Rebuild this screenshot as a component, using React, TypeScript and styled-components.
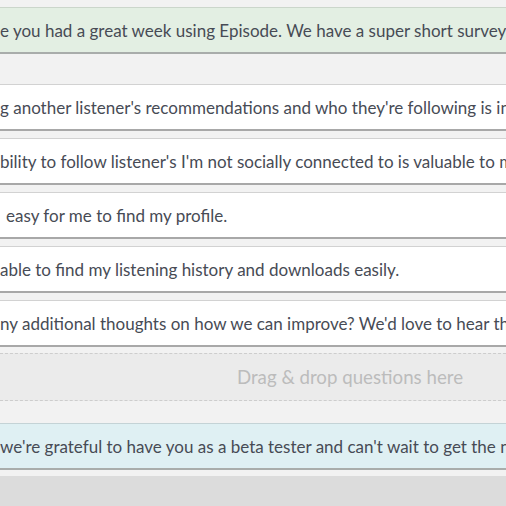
import React from "react";
import styled, { createGlobalStyle } from "styled-components";

const Global = createGlobalStyle`
  html, body { margin: 0; padding: 0; }
  body {
    width: 506px;
    height: 506px;
    overflow: hidden;
    background: #dcdcdc;
    font-family: Lato, "Open Sans", sans-serif;
  }
`;

const Page = styled.div`
  display: flex;
  flex-direction: column;
`;

const Canvas = styled.div`
  background: #f2f2f2;
  padding: 7px 0 6px;
  display: flex;
  flex-direction: column;
`;

const Banner = styled.div<{ $tone: "green" | "blue" }>`
  height: 44px;
  display: flex;
  align-items: center;
  white-space: nowrap;
  overflow: hidden;
  font-size: 17px;
  color: #474b55;
  background: ${(p) => (p.$tone === "green" ? "#e3efe3" : "#dff0f3")};
  border-top: 1px solid ${(p) => (p.$tone === "green" ? "#cbd6cb" : "#c4d3d6")};
  border-bottom: 2px solid #a9adab;
`;

const Text = styled.span<{ $indent: number }>`
  display: block;
  margin-left: ${(p) => p.$indent}px;
`;

const Spacer = styled.div<{ $h: number }>`
  height: ${(p) => p.$h}px;
`;

const List = styled.div`
  display: flex;
  flex-direction: column;
  gap: 7px;
`;

const Card = styled.div`
  height: 44px;
  display: flex;
  align-items: center;
  white-space: nowrap;
  overflow: hidden;
  font-size: 17px;
  color: #474b55;
  background: #ffffff;
  border-top: 1px solid #d2d2d2;
  border-bottom: 2px solid #a8a8a8;
`;

const DropZone = styled.div`
  margin-top: 6px;
  height: 46px;
  display: flex;
  align-items: center;
  justify-content: center;
  padding-left: 194px;
  background: #ebebeb;
  border-top: 1px dashed #cdcdcd;
  border-bottom: 1px dashed #cdcdcd;
  color: #bcbcbc;
  font-size: 18.7px;
`;

const Bottom = styled.div`
  height: 40px;
  background: #dcdcdc;
`;

const questions: { text: string; indent: number }[] = [
  { text: "g another listener's recommendations and who they're following is interesting", indent: 0 },
  { text: "bility to follow listener's I'm not socially connected to is valuable to me", indent: 0 },
  { text: "easy for me to find my profile.", indent: 6 },
  { text: "able to find my listening history and downloads easily.", indent: 0 },
  { text: "ny additional thoughts on how we can improve? We'd love to hear them", indent: 0 },
];

export default function App() {
  return (
    <Page>
      <Global />
      <Canvas>
        <Banner $tone="green">
          <Text $indent={0}>e you had a great week using Episode. We have a super short survey for you</Text>
        </Banner>
        <Spacer $h={30} />
        <List>
          {questions.map((q) => (
            <Card key={q.text}>
              <Text $indent={q.indent}>{q.text}</Text>
            </Card>
          ))}
        </List>
        <DropZone>Drag &amp; drop questions here</DropZone>
        <Spacer $h={22} />
        <Banner $tone="blue">
          <Text $indent={0}>we're grateful to have you as a beta tester and can't wait to get the next version</Text>
        </Banner>
      </Canvas>
      <Bottom />
    </Page>
  );
}
